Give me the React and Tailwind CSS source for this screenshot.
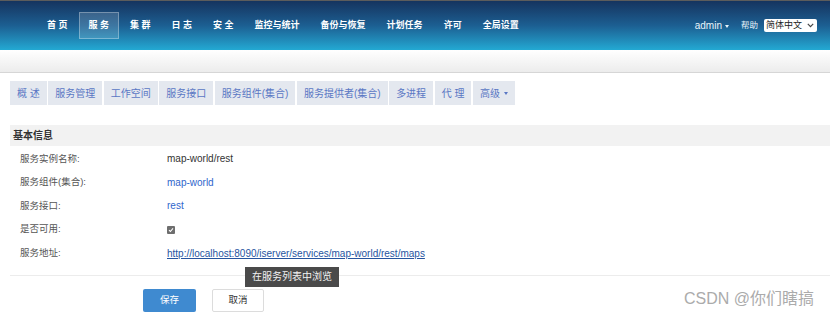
import React from "react";

const navItems = ["首 页", "服 务", "集 群", "日 志", "安 全", "监控与统计", "备份与恢复", "计划任务", "许可", "全局设置"];

const tabs = ["概 述", "服务管理", "工作空间", "服务接口", "服务组件(集合)", "服务提供者(集合)", "多进程", "代 理"];

function Row({ label, children }) {
  return (
    <div className="flex h-[23.6px] items-center">
      <div className="w-[147px] text-[9.5px] text-[#555]">{label}</div>
      <div className="text-[10px]">{children}</div>
    </div>
  );
}

export default function App() {
  return (
    <div className="relative h-[319px] w-[830px] overflow-hidden bg-white font-['Liberation_Sans','Noto_Sans_CJK_SC',sans-serif]">
      {/* header */}
      <div className="flex h-[50px] items-center border-t border-[#5c5c5c] bg-gradient-to-b from-[#15345f] via-[#1c5f92] to-[#23a9d3] pl-[37px] pr-[13px]">
        <nav className="flex gap-px">
          {navItems.map((item, i) => (
            <div
              key={item}
              className={
                "flex h-[27px] items-center px-[9px] text-[9px] font-bold text-white " +
                (i === 1 ? "border border-white/30 bg-white/15" : "border border-transparent")
              }
            >
              {item}
            </div>
          ))}
        </nav>
        <div className="ml-auto flex items-center text-white">
          <span className="text-[10px] text-[#e8f4fa]">admin</span>
          <span className="ml-[3px] mt-[1px] border-x-[2.5px] border-t-[3px] border-x-transparent border-t-[#e8f4fa]" />
          <span className="ml-[12px] text-[8.5px] text-[#e8f4fa]">帮助</span>
          <div className="ml-[6px] flex h-[13px] w-[53px] items-center justify-between rounded-[2px] bg-white pl-[2px] pr-[3px] text-[9px] text-[#222]">
            <span>简体中文</span>
            <svg width="7" height="5" viewBox="0 0 7 5" fill="none">
              <path d="M0.8 0.9L3.5 3.6L6.2 0.9" stroke="#444" strokeWidth="1.2" />
            </svg>
          </div>
        </div>
      </div>

      {/* sub bar */}
      <div className="h-[23px] border-b border-[#d6d6d6] bg-gradient-to-b from-white to-[#ececec]" />

      {/* tabs */}
      <div className="mt-[8px] flex gap-[1.5px] px-[10px]">
        {tabs.map((t) => (
          <div key={t} className="flex h-[24px] items-center bg-[#e4e8ef] px-[7px] text-[10px] text-[#5a77c4]">
            {t}
          </div>
        ))}
        <div className="flex h-[24px] items-center gap-[4px] bg-[#e4e8ef] px-[7px] text-[10px] text-[#5a77c4]">
          高级
          <span className="border-x-[2.5px] border-t-[3px] border-x-transparent border-t-[#5a77c4]" />
        </div>
      </div>

      {/* info */}
      <div className="ml-[10px] mt-[20px] flex h-[21px] items-center bg-[#f2f2f2] pl-[3px] text-[10px] font-bold text-[#333]">
        基本信息
      </div>
      <div className="mt-[1px] pl-[20px]">
        <Row label="服务实例名称:">
          <span className="text-[#333]">map-world/rest</span>
        </Row>
        <Row label="服务组件(集合):">
          <span className="text-[#2f66cc]">map-world</span>
        </Row>
        <Row label="服务接口:">
          <span className="text-[#2f66cc]">rest</span>
        </Row>
        <Row label="是否可用:">
          <span className="flex h-[8px] w-[8px] items-center justify-center rounded-[1px] bg-[#6e6e6e]">
            <svg width="6" height="6" viewBox="0 0 6 6" fill="none">
              <path d="M1 3.1L2.4 4.5L5 1.4" stroke="white" strokeWidth="1.1" />
            </svg>
          </span>
        </Row>
        <Row label="服务地址:">
          <span className="text-[10px] text-[#26549f] underline">http://localhost:8090/iserver/services/map-world/rest/maps</span>
        </Row>
      </div>

      {/* actions */}
      <div className="relative ml-[10px] mt-[10px] border-t border-[#ececec] pl-[133px] pt-[13px]">
        <div className="flex gap-[16px]">
          <button className="h-[23px] w-[53px] rounded-[2px] bg-[#3f8ad0] text-[9.5px] text-white">保存</button>
          <button className="h-[23px] w-[52px] rounded-[2px] border border-[#dcdcdc] bg-white text-[9.5px] text-[#333]">取消</button>
        </div>
        <div className="absolute left-[235px] top-[-9px] flex h-[20px] items-center bg-[#4a4a4a] px-[7px] text-[10px] text-[#f2f2f2]">
          在服务列表中浏览
        </div>
      </div>

      <div className="absolute bottom-[8px] right-[16px] text-[16px] text-[#ababab]">CSDN @你们瞎搞</div>
    </div>
  );
}
